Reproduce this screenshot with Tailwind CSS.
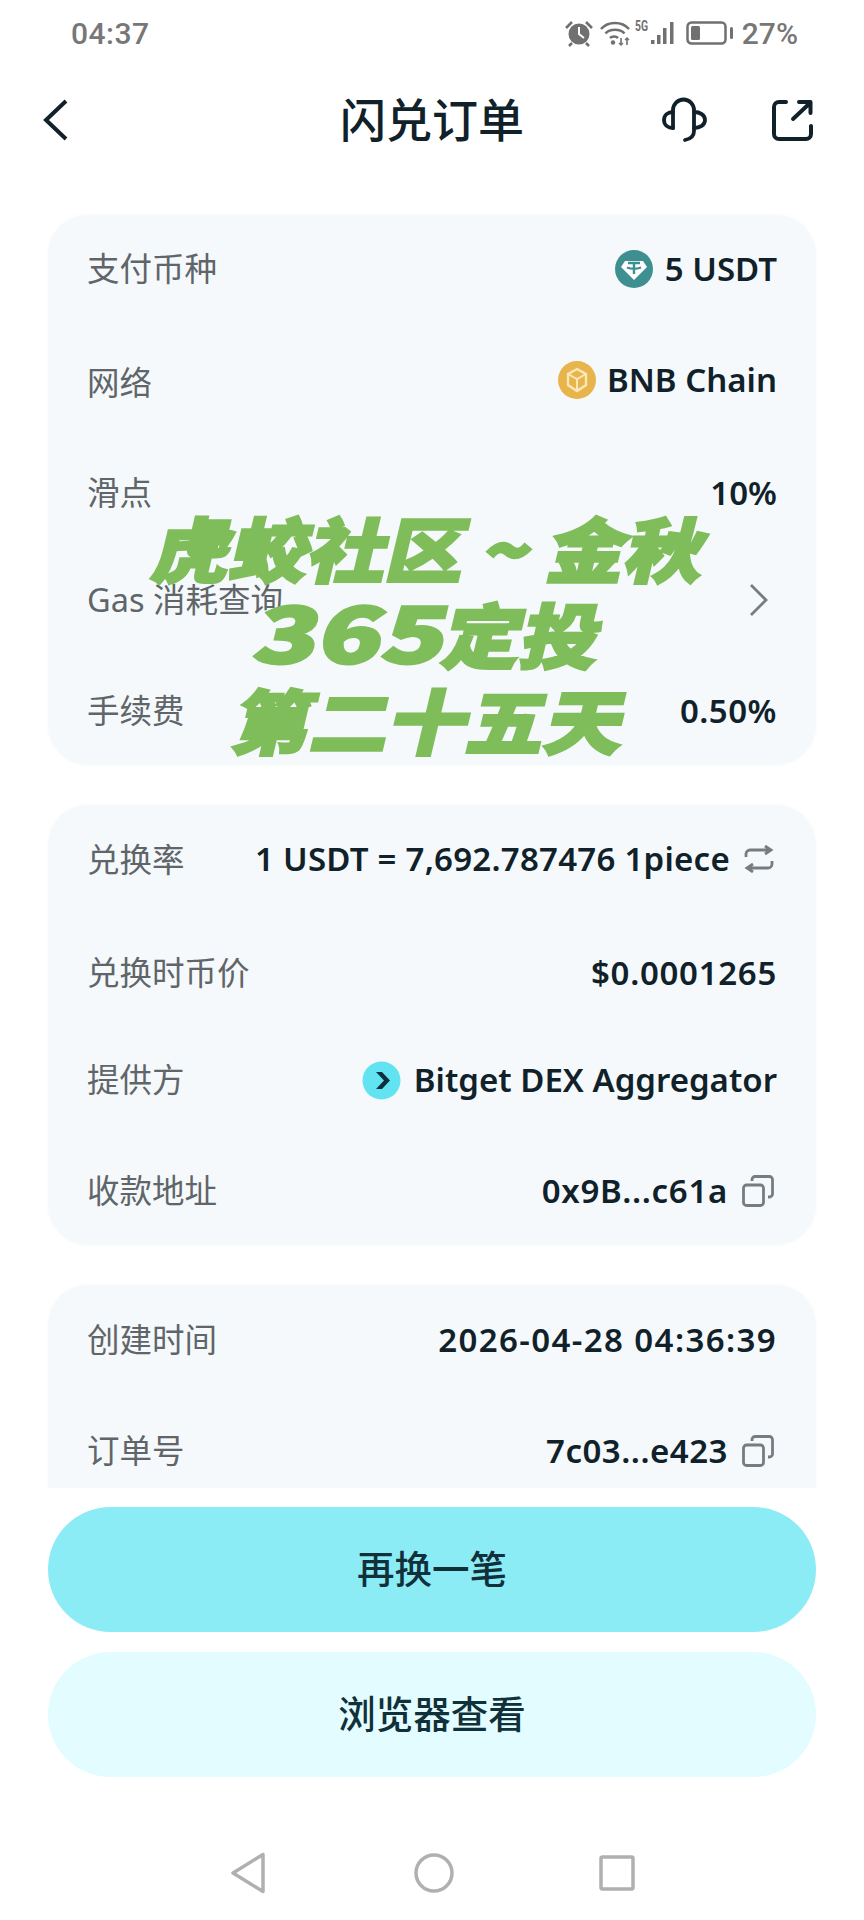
<!DOCTYPE html>
<html lang="zh-CN">
  <head>
    <meta charset="UTF-8" />
    <meta name="viewport" content="width=device-width, initial-scale=1.0" />
    <title>闪兑订单</title>
    <script src="https://cdn.jsdelivr.net/npm/@tailwindcss/browser@4"></script>
  </head>
  <body class="bg-white font-['Noto_Sans','Noto_Sans_CJK_SC',sans-serif] text-[#10212a]">
    <div class="relative flex flex-col w-[864px] h-[1920px] overflow-hidden bg-white">
      <!-- Status bar -->
      <div class="flex items-center justify-between h-[64px] pt-[2px] pl-[71px] pr-[66px] text-[#777777] font-['Roboto',sans-serif] text-[30px] font-medium">
        <span class="tracking-[0.5px]">04:37</span>
        <div class="flex items-center">
          <svg class="w-[28px] h-[28px]" viewBox="0 0 28 28" fill="none">
            <circle cx="14" cy="15" r="10.500" fill="#707070" />
            <path d="M14 8v7l5 4" stroke="#fff" stroke-width="2" />
            <path d="M1 9l6-6M27 9l-6-6M7 24l-3 3M21 24l3 3" stroke="#707070" stroke-width="2.600" />
          </svg>
          <svg class="w-[30px] h-[26px] ml-[7px]" viewBox="0 0 30 26" fill="none" stroke="#707070" stroke-width="2.600">
            <path d="M1 9c7-8 21-8 28 0M5.500 13.500c4.500-5 14.500-5 19 0M10 18c2-2 6-2 8 0" />
            <circle cx="13" cy="22.500" r="2.200" fill="#707070" stroke="none" />
            <path d="M21 18v7M27 18v7" stroke-width="1.600" />
            <path d="M19 23l2 2 2-2M25 20l2-2 2 2" stroke-width="1.400" />
          </svg>
          <svg class="w-[40px] h-[26px] ml-[5px]" viewBox="0 0 40 26" fill="#707070">
            <text x="0" y="11" font-size="14" font-weight="700" textLength="13" lengthAdjust="spacingAndGlyphs" font-family="Roboto">5G</text>
            <rect x="16" y="20" width="3.500" height="4" />
            <rect x="22" y="15" width="3.500" height="9" />
            <rect x="28" y="8" width="3.500" height="16" />
            <rect x="35" y="2" width="3.500" height="22" />
          </svg>
          <svg class="w-[47px] h-[24px] ml-[11px]" viewBox="0 0 47 24" fill="none">
            <rect x="1.500" y="1.500" width="38" height="21" rx="4" stroke="#707070" stroke-width="2.500" />
            <rect x="5" y="5" width="9" height="14" rx="1.500" fill="#707070" />
            <rect x="44" y="6" width="3" height="12" rx="1.500" fill="#707070" />
          </svg>
          <span class="ml-[9px]">27%</span>
        </div>
      </div>

      <!-- Header -->
      <header class="flex items-center justify-between h-[112px] pl-[43px] pr-[51px]">
        <svg class="w-[25px] h-[42px]" viewBox="0 0 25 42" fill="none" stroke="#10212a" stroke-width="4">
          <path d="M23 2L3 21l20 19" />
        </svg>
        <h1 class="absolute left-0 w-[864px] pb-[2px] text-center text-[46px] font-medium">闪兑订单</h1>
        <div class="flex items-center gap-[64px]">
          <svg class="w-[46px] h-[46px]" viewBox="0 0 46 46" fill="none" stroke="#10212a" stroke-width="3.800" stroke-linecap="round" stroke-linejoin="round">
            <path d="M11 31V13a10.500 10.500 0 0 1 21 0v21c0 5-4 8-9 9" />
            <path d="M11 15c-5 0-9 3-9 8s4 8 9 8M32 15c6 0 11 3 11 8s-5 8-11 8" />
          </svg>
          <svg class="w-[41px] h-[42px]" viewBox="0 0 41 42" fill="none" stroke="#10212a" stroke-width="4" stroke-linecap="round" stroke-linejoin="round">
            <path d="M14 3H7a5 5 0 0 0-5 5v27a5 5 0 0 0 5 5h27a5 5 0 0 0 5-5v-8" />
            <path d="M21 20L38 4M27 3h11.500v11" />
          </svg>
        </div>
      </header>

      <!-- Order details -->
      <main class="flex-none h-[1312px] overflow-hidden px-[48px] pt-[39px]">
        <section class="rounded-[40px] bg-[#f5f9fb] shadow-[0_0_4px_#f5f9fb] px-[39px] text-[33px]">
          <div class="flex items-center justify-between h-[108px]">
            <span class="text-[32.500px] text-[#5f6569]">支付币种</span>
            <div class="flex items-center gap-[12px] font-semibold">
              <svg class="w-[38px] h-[38px]" viewBox="0 0 38 38">
                <circle cx="19" cy="19" r="19" fill="#3e9090" />
                <path d="M10 11h18l4 6-13 13L6 17z" fill="#fff" />
                <path d="M13 13h12M19 13v11M12 17.500c4 1.500 10 1.500 14 0" stroke="#3e9090" stroke-width="2.400" fill="none" />
              </svg>
              <span>5 USDT</span>
            </div>
          </div>
          <div class="flex items-center justify-between h-[120px]">
            <span class="text-[32.500px] text-[#5f6569]">网络</span>
            <div class="flex items-center gap-[11px] mb-[7px] font-semibold">
              <svg class="w-[38px] h-[38px]" viewBox="0 0 38 38">
                <circle cx="19" cy="19" r="19" fill="#e8b44c" />
                <path d="M19 8l9 5v11l-9 6-9-6V13z" fill="none" stroke="#fbe7b8" stroke-width="2.400" />
                <path d="M10 13l9 5 9-5M19 18v12" fill="none" stroke="#fbe7b8" stroke-width="2" />
              </svg>
              <span>BNB Chain</span>
            </div>
          </div>
          <div class="flex items-center justify-between h-[100px]">
            <span class="text-[32.500px] text-[#5f6569]">滑点</span>
            <span class="font-semibold">10%</span>
          </div>
          <div class="flex items-center justify-between h-[114px]">
            <span class="text-[32.500px] text-[#5f6569]">Gas 消耗查询</span>
            <svg class="w-[20px] h-[34px] mr-[8px]" viewBox="0 0 20 34" fill="none" stroke="#777c80" stroke-width="2.800">
              <path d="M2 2l15 15L2 32" />
            </svg>
          </div>
          <div class="flex items-center justify-between h-[108px]">
            <span class="text-[32.500px] text-[#5f6569]">手续费</span>
            <span class="font-semibold tracking-[0.5px]">0.50%</span>
          </div>
        </section>

        <section class="mt-[40px] rounded-[40px] bg-[#f5f9fb] shadow-[0_0_4px_#f5f9fb] px-[39px] text-[33px]">
          <div class="flex items-center justify-between h-[110px]">
            <span class="text-[32.500px] text-[#5f6569]">兑换率</span>
            <div class="flex items-center gap-[14px] mr-[3px] mb-[2px] font-semibold">
              <span class="tracking-[0.25px]">1 USDT = 7,692.787476 1piece</span>
              <svg class="w-[30px] h-[28px]" viewBox="0 0 30 28" fill="none" stroke="#777c80" stroke-width="2.800">
                <path d="M2 12V9a4 4 0 0 1 4-4h20M21 1l6 4-6 4M28 16v3a4 4 0 0 1-4 4H4M9 19l-6 4 6 4" />
              </svg>
            </div>
          </div>
          <div class="flex items-center justify-between h-[116px]">
            <span class="text-[32.500px] text-[#5f6569]">兑换时币价</span>
            <span class="font-semibold tracking-[0.7px]">$0.0001265</span>
          </div>
          <div class="flex items-center justify-between h-[98px] mb-[8px]">
            <span class="text-[32.500px] text-[#5f6569]">提供方</span>
            <div class="flex items-center gap-[13px] font-semibold">
              <svg class="w-[39px] h-[39px]" viewBox="0 0 39 39">
                <circle cx="19.500" cy="19.500" r="19" fill="#62e3f2" />
                <path d="M14 11h6l8 8.500-8 8.500h-6l8-8.500z" fill="#0e2f3d" />
              </svg>
              <span>Bitget DEX Aggregator</span>
            </div>
          </div>
          <div class="flex items-center justify-between h-[108px]">
            <span class="text-[32.500px] text-[#5f6569]">收款地址</span>
            <div class="flex items-center gap-[14px] mr-[3px] font-semibold">
              <span class="tracking-[0.7px]">0x9B...c61a</span>
              <svg class="w-[32px] h-[32px]" viewBox="0 0 32 32" fill="none" stroke="#777c80" stroke-width="2.800">
                <rect x="1.500" y="10" width="20" height="20.500" rx="3" />
                <path d="M10 6V4.500a3 3 0 0 1 3-3h14.500a3 3 0 0 1 3 3V19a3 3 0 0 1-3 3H26" />
              </svg>
            </div>
          </div>
        </section>

        <section class="mt-[40px] h-[260px] rounded-t-[40px] bg-[#f5f9fb] shadow-[0_0_4px_#f5f9fb] px-[39px] text-[33px]">
          <div class="flex items-center justify-between h-[110px]">
            <span class="text-[32.500px] text-[#5f6569]">创建时间</span>
            <span class="font-semibold tracking-[1.400px]">2026-04-28 04:36:39</span>
          </div>
          <div class="flex items-center justify-between h-[112px]">
            <span class="text-[32.500px] text-[#5f6569]">订单号</span>
            <div class="flex items-center gap-[14px] mr-[3px] font-semibold">
              <span class="tracking-[0.5px]">7c03...e423</span>
              <svg class="w-[32px] h-[32px]" viewBox="0 0 32 32" fill="none" stroke="#777c80" stroke-width="2.800">
                <rect x="1.500" y="10" width="20" height="20.500" rx="3" />
                <path d="M10 6V4.500a3 3 0 0 1 3-3h14.500a3 3 0 0 1 3 3V19a3 3 0 0 1-3 3H26" />
              </svg>
            </div>
          </div>
        </section>
      </main>

      <!-- Actions -->
      <div class="relative flex flex-col gap-[20px] px-[48px] pt-[19px] bg-white">
        <button class="h-[125px] rounded-full bg-[#8cecf6] text-[37.500px] font-medium text-[#10303a]">再换一笔</button>
        <button class="h-[125px] rounded-full bg-[#e3fcff] text-[37.500px] font-medium text-[#10303a]">浏览器查看</button>
      </div>

      <!-- Navigation bar -->
      <nav class="flex flex-1 items-center justify-center gap-[145px] pt-[48px]">
        <svg class="w-[36px] h-[42px] mr-[3px]" viewBox="0 0 36 42" fill="none" stroke="#b0b0b0" stroke-width="3.500" stroke-linejoin="round">
          <path d="M33 2.500v37L3 21z" />
        </svg>
        <svg class="w-[40px] h-[40px]" viewBox="0 0 40 40" fill="none" stroke="#b0b0b0" stroke-width="3.500">
          <circle cx="20" cy="20" r="18" />
        </svg>
        <svg class="w-[36px] h-[36px]" viewBox="0 0 36 36" fill="none" stroke="#b0b0b0" stroke-width="3.500">
          <rect x="2" y="2" width="32" height="32" rx="1.500" />
        </svg>
      </nav>

      <!-- Watermark title over the page -->
      <div class="absolute left-0 top-[503px] w-[864px] text-center text-[#7fbd5b] text-[78px] leading-[86px] font-black font-['Noto_Sans_CJK_SC',sans-serif] [-webkit-text-stroke:3px_#7fbd5b]">
        <p class="-skew-x-12 scale-y-[0.9]">虎蛟社区 ~ 金秋</p>
        <p class="-skew-x-12 scale-y-[0.9]"><span class="inline-block mx-[16px] text-[84px] leading-[80px] scale-x-[1.25]">365</span>定投</p>
        <p class="-skew-x-12 scale-y-[0.9]">第二十五天</p>
      </div>
    </div>
  </body>
</html>
